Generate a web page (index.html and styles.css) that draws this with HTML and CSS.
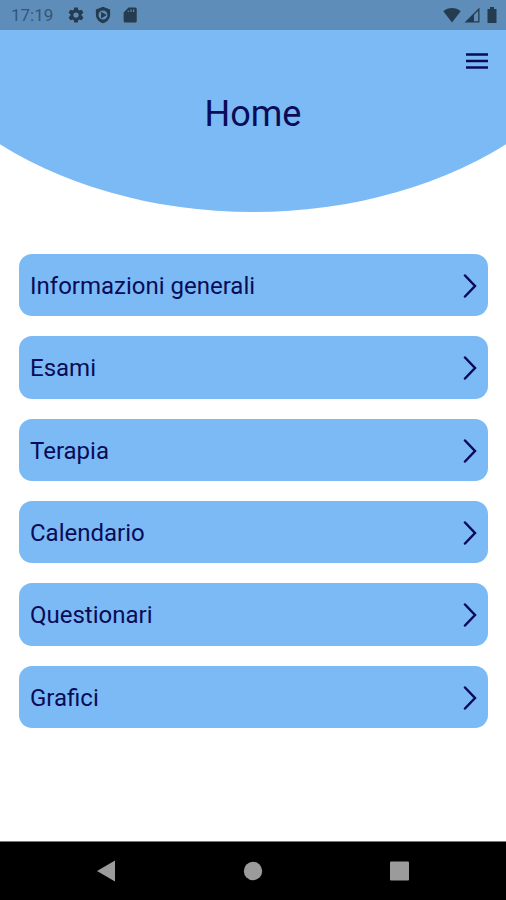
FILE: index.html
```html
<!DOCTYPE html>
<html lang="it">
<head>
  <meta charset="UTF-8" />
  <meta name="viewport" content="width=device-width, initial-scale=1.0"/>
  <title>Home</title>
  <link rel="stylesheet" href="styles.css">
</head>
<body>

  <header>
    <div class="status-bar">
      <div class="status-left">
        <span class="orario">17:19</span>
        <svg viewBox="0 0 24 24"><path fill-rule="evenodd" d="M19.4 13a7.500 7.500 0 0 0 0-2l2.200-1.700a.5.5 0 0 0 .1-.6l-2-3.500a.5.5 0 0 0-.6-.2l-2.500 1a7.300 7.300 0 0 0-1.700-1l-.4-2.600a.5.5 0 0 0-.5-.4h-4a.5.5 0 0 0-.5.400L9.100 5a7.700 7.700 0 0 0-1.700 1l-2.500-1a.5.5 0 0 0-.6.200l-2 3.500a.5.5 0 0 0 .1.600L4.600 11a7.500 7.500 0 0 0 0 2l-2.200 1.700a.5.5 0 0 0-.1.600l2 3.500c.1.200.4.300.6.200l2.500-1a7.300 7.300 0 0 0 1.700 1l.4 2.600c0 .2.200.4.500.4h4c.3 0 .5-.2.500-.4l.4-2.600a7.700 7.700 0 0 0 1.700-1l2.500 1c.2.100.5 0 .6-.2l2-3.500a.5.5 0 0 0-.1-.6zM12 15.500a3.500 3.500 0 1 1 0-7 3.500 3.500 0 0 1 0 7z"/></svg>
        <svg viewBox="0 0 24 24"><path fill-rule="evenodd" d="M12 1 2.500 4.600v7c0 5.200 4 9.900 9.500 11.400 5.500-1.500 9.500-6.200 9.500-11.400v-7zM12 6a6 6 0 1 1 0 12 6 6 0 0 1 0-12zM9.500 7.500v9L17 12z"/></svg>
        <svg viewBox="0 0 24 24"><path fill-rule="evenodd" d="M19 2h-9L3.500 8.500V20a2 2 0 0 0 2 2H19a2 2 0 0 0 2-2V4a2 2 0 0 0-2-2zM9 8V6.200h1.500V8zm3.500 0V4.800H14V8zM16 8V4.800h1.500V8z"/></svg>
      </div>
      <div class="status-right">
        <svg viewBox="0 0 18 18"><path d="M9 16.500.3 5.200C2.800 3 5.800 2 9 2s6.200 1 8.700 3.200z"/></svg>
        <svg viewBox="0 0 18 18"><path fill-rule="evenodd" d="M16.500 1.500v15h-15zM11 9v6.200h4.200V4.800z"/></svg>
        <svg viewBox="0 0 18 18"><path d="M7 1h4v2h2.500v14h-9V3H7z"/></svg>
      </div>
    </div>

    <div class="barra-menu">
      <button class="menu" type="button" aria-label="Menu">
        <svg viewBox="0 0 24 24"><path d="M1 5.500h22M1 12h22M1 18.500h22"/></svg>
      </button>
    </div>
    <h1>Home</h1>
  </header>

  <main>
    <nav class="lista">
      <a href="#informazioni">Informazioni generali <svg viewBox="0 0 14 24"><path d="m2 1.500 10 10.500L2 22.500"/></svg></a>
      <a href="#esami">Esami <svg viewBox="0 0 14 24"><path d="m2 1.500 10 10.500L2 22.500"/></svg></a>
      <a href="#terapia">Terapia <svg viewBox="0 0 14 24"><path d="m2 1.500 10 10.500L2 22.500"/></svg></a>
      <a href="#calendario">Calendario <svg viewBox="0 0 14 24"><path d="m2 1.500 10 10.500L2 22.500"/></svg></a>
      <a href="#questionari">Questionari <svg viewBox="0 0 14 24"><path d="m2 1.500 10 10.500L2 22.500"/></svg></a>
      <a href="#grafici">Grafici <svg viewBox="0 0 14 24"><path d="m2 1.500 10 10.500L2 22.500"/></svg></a>
    </nav>
  </main>

  <footer>
    <button type="button" aria-label="Indietro"><svg viewBox="0 0 24 24"><path d="M21 1.500v21L3 12z"/></svg></button>
    <button type="button" aria-label="Schermata principale"><svg viewBox="0 0 24 24"><circle cx="12" cy="12" r="9.200"/></svg></button>
    <button type="button" aria-label="App recenti"><svg viewBox="0 0 24 24"><rect x="2" y="2.500" width="19" height="19" rx="1"/></svg></button>
  </footer>

</body>
</html>
```

FILE: styles.css
```css
* {
  box-sizing: border-box;
}

body {
  font-family: Roboto, sans-serif;
  background-color: #fff;
  color: #0a0c56;
  margin: 0;
  min-height: 100vh;
  display: flex;
  flex-direction: column;
}

svg {
  display: block;
  flex-shrink: 0;
}

button {
  background: none;
  border: none;
  padding: 0;
  cursor: pointer;
}

/* sfondo curvo */
header {
  background-color: #7cbaf6;
  padding-bottom: 77px;
  clip-path: ellipse(74% 258px at 50% -46px);
}

.status-bar {
  background-color: #5f8db9;
  height: 30px;
  padding: 0 5px 0 11px;
  display: flex;
  justify-content: space-between;
  align-items: center;
}

.status-left,
.status-right {
  display: flex;
  align-items: center;
}

.status-left {
  gap: 9px;
}

.status-right {
  gap: 2px;
}

.status-bar svg {
  width: 18px;
  height: 18px;
  fill: #243b50;
}

.orario {
  color: #34567a;
  font-size: 17px;
  line-height: 20px;
  margin-right: 5px;
}

.barra-menu {
  display: flex;
  justify-content: flex-end;
  padding: 19px 17px 0;
}

.menu svg {
  width: 24px;
  height: 24px;
  stroke: #0a0c56;
  stroke-width: 2.5;
}

h1 {
  font-size: 36px;
  font-weight: 400;
  line-height: 42px;
  text-align: center;
  margin: 20px 0 0;
}

main {
  flex: 1;
  display: flex;
  padding: 42px 18px 113px 19px;
}

.lista {
  flex: 1;
  display: grid;
  grid-auto-rows: 1fr;
  gap: 20px;
}

.lista a {
  background-color: #7cbaf6;
  color: #0a0c56;
  border-radius: 13px;
  padding: 14px 11px 12px;
  display: flex;
  justify-content: space-between;
  align-items: center;
  font-size: 24px;
  line-height: 28px;
  text-decoration: none;
}

.lista svg {
  width: 14px;
  height: 24px;
  fill: none;
  stroke: #0a0c56;
  stroke-width: 2.5;
  stroke-linecap: round;
}

footer {
  background-color: #000;
  border-top: 1px solid #777;
  height: 59px;
  padding: 0 33px;
  display: flex;
}

footer button {
  flex: 1;
  display: flex;
  justify-content: center;
  align-items: center;
}

footer svg {
  width: 24px;
  height: 24px;
  fill: #9b9b9b;
}
```
